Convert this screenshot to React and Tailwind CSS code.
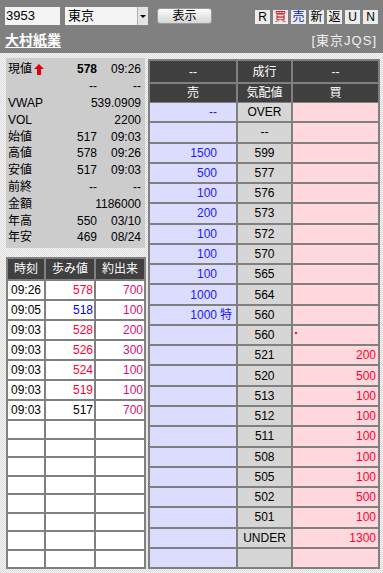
import React from "react";

const info = [
  { label: "現値", arrow: true, value: "578", bold: true, time: "09:26" },
  { label: "", value: "--", time: "--" },
  { label: "VWAP", wide: "539.0909" },
  { label: "VOL", wide: "2200" },
  { label: "始値", value: "517", time: "09:03" },
  { label: "高値", value: "578", time: "09:26" },
  { label: "安値", value: "517", time: "09:03" },
  { label: "前終", value: "--", time: "--" },
  { label: "金額", wide: "1186000" },
  { label: "年高", value: "550", time: "03/10" },
  { label: "年安", value: "469", time: "08/24" },
];

const ticks = [
  { time: "09:26", price: "578", up: "red", vol: "700" },
  { time: "09:05", price: "518", up: "blue", vol: "100" },
  { time: "09:03", price: "528", up: "red", vol: "200" },
  { time: "09:03", price: "526", up: "red", vol: "300" },
  { time: "09:03", price: "524", up: "red", vol: "100" },
  { time: "09:03", price: "519", up: "red", vol: "100" },
  { time: "09:03", price: "517", up: "none", vol: "700" },
];

const book = [
  { sell: "--", price: "OVER" },
  { price: "--" },
  { sell: "1500", price: "599" },
  { sell: "500", price: "577" },
  { sell: "100", price: "576" },
  { sell: "200", price: "573" },
  { sell: "100", price: "572" },
  { sell: "100", price: "570" },
  { sell: "100", price: "565" },
  { sell: "1000", price: "564" },
  { sell: "1000", tag: "特", price: "560" },
  { price: "560", dot: true },
  { price: "521", buy: "200" },
  { price: "520", buy: "500" },
  { price: "513", buy: "100" },
  { price: "512", buy: "100" },
  { price: "511", buy: "100" },
  { price: "508", buy: "100" },
  { price: "505", buy: "100" },
  { price: "502", buy: "500" },
  { price: "501", buy: "100" },
  { price: "UNDER", buy: "1300" },
  {},
];

const tools = [
  { t: "R", c: "text-black" },
  { t: "買", c: "text-[#d00000]" },
  { t: "売", c: "text-[#0020c0]" },
  { t: "新", c: "text-black" },
  { t: "返", c: "text-black" },
  { t: "U", c: "text-black" },
  { t: "N", c: "text-black" },
];

const UpArrow = () => (
  <svg width="10" height="11" viewBox="0 0 10 11" className="ml-[2px]">
    <polygon points="5,0 10,5 7,5 7,11 3,11 3,5 0,5" fill="#e00010" />
  </svg>
);

const priceColor = {
  red: "text-[#ff0033]",
  blue: "text-[#0000ff]",
  none: "text-black",
};

export default function App() {
  return (
    <div className="w-[383px] h-[573px] overflow-hidden text-[12px] text-black font-['Liberation_Sans','Noto_Sans_CJK_JP',sans-serif]">
      {/* top bar */}
      <div className="h-[53px] bg-[#808080] px-[5px] pt-[7px]">
        <div className="flex items-start">
          <div className="w-[55px] h-[18px] bg-[#f4f4f4] pl-[1px] flex items-center text-[13px]">3953</div>
          <div className="ml-[5px] w-[83px] h-[18px] bg-[#f4f4f4] flex items-stretch">
            <div className="flex-1 flex items-center pl-[3px] text-[13px]">東京</div>
            <div className="w-[11px] bg-[#e4e4e4] border-l border-[#b0b0b0] flex items-center justify-center">
              <div className="w-0 h-0 border-l-[3px] border-r-[3px] border-t-[3px] border-l-transparent border-r-transparent border-t-black" />
            </div>
          </div>
          <div className="ml-[9px] mt-[1px] w-[55px] h-[16px] rounded-[3px] border border-[#9a9a9a] bg-gradient-to-b from-[#fbfbfb] to-[#d6d6d6] flex items-center justify-center text-[12px]">
            表示
          </div>
          <div className="ml-auto mt-[3px] flex gap-[3px]">
            {tools.map((b) => (
              <div
                key={b.t}
                className={`w-[15px] h-[14px] bg-[#ececec] flex items-center justify-center text-[12px] leading-none ${b.c}`}
              >
                {b.t}
              </div>
            ))}
          </div>
        </div>
        <div className="flex justify-between items-center mt-[5px]">
          <span className="text-white font-bold text-[14px] underline underline-offset-2">大村紙業</span>
          <span className="text-[#f0f0f0] text-[13px] mr-[1px] tracking-[1px]">[東京JQS]</span>
        </div>
      </div>

      {/* body */}
      <div className="h-[520px] flex pl-[6px] pt-[5px] bg-[image:repeating-conic-gradient(#dadada_0_25%,#f6f6f6_0_50%)] bg-[length:2px_2px]">
        {/* left column */}
        <div className="w-[140px] flex flex-col">
          <div className="w-[139px] h-[190px] bg-[#cccccc] pt-[3px] pl-[2px] pr-[4px]">
            {info.map((r, i) => (
              <div key={i} className="h-[16.8px] flex items-center">
                <span className="flex-1 flex items-center">
                  {r.label}
                  {r.arrow && <UpArrow />}
                </span>
                {r.wide ? (
                  <span className="text-right">{r.wide}</span>
                ) : (
                  <>
                    <span className={`w-[50px] text-right ${r.bold ? "font-bold" : ""}`}>{r.value}</span>
                    <span className="w-[44px] text-right">{r.time}</span>
                  </>
                )}
              </div>
            ))}
          </div>

          <div className="mt-[9px] h-[312px] bg-[#808080] p-[2px] flex flex-col gap-[2px]">
            <div className="h-[20px] grid grid-cols-[36px_48px_48px] gap-[2px]">
              {["時刻", "歩み値", "約出来"].map((h) => (
                <div key={h} className="bg-[#404040] text-white flex items-center justify-center">
                  {h}
                </div>
              ))}
            </div>
            {Array.from({ length: 15 }).map((_, i) => {
              const t = ticks[i];
              return (
                <div key={i} className="flex-1 grid grid-cols-[36px_48px_48px] gap-[2px]">
                  <div className="bg-white flex items-center justify-center">{t?.time}</div>
                  <div className={`bg-white flex items-center justify-end pr-[1px] ${t ? priceColor[t.up] : ""}`}>
                    {t?.price}
                  </div>
                  <div className="bg-white flex items-center justify-end pr-[1px] text-[#d0107f]">{t?.vol}</div>
                </div>
              );
            })}
          </div>
        </div>

        {/* order book */}
        <div className="ml-[2px] mt-[1px] w-[232px] h-[510px] bg-[#808080] p-[2px] flex flex-col gap-[2px]">
          <div className="h-[21px] grid grid-cols-[86px_53px_85px] gap-[2px] text-white">
            <div className="bg-[#404040] flex items-center justify-center">--</div>
            <div className="bg-[#404040] flex items-center justify-center">成行</div>
            <div className="bg-[#404040] flex items-center justify-center">--</div>
          </div>
          <div className="h-[17px] grid grid-cols-[86px_53px_85px] gap-[2px] text-white">
            <div className="bg-[#404040] flex items-center justify-center">売</div>
            <div className="bg-[#404040] flex items-center justify-center">気配値</div>
            <div className="bg-[#404040] flex items-center justify-center">買</div>
          </div>
          {book.map((r, i) => (
            <div key={i} className="flex-1 grid grid-cols-[86px_53px_85px] gap-[2px]">
              <div className="bg-[#dcdcff] flex items-center justify-end text-[#1a1aff]">
                <span>{r.sell}</span>
                <span className="w-[19px] pl-[3px]">{r.tag}</span>
              </div>
              <div className="bg-[#d6d6d6] flex items-center justify-center">{r.price}</div>
              <div className="bg-[#ffd9dd] flex items-center justify-end pr-[2px] text-[#ff0033] relative">
                {r.dot && <span className="absolute left-[2px] top-[6px] w-[2px] h-[2px] bg-[#ff0033]" />}
                {r.buy}
              </div>
            </div>
          ))}
        </div>
      </div>
    </div>
  );
}
